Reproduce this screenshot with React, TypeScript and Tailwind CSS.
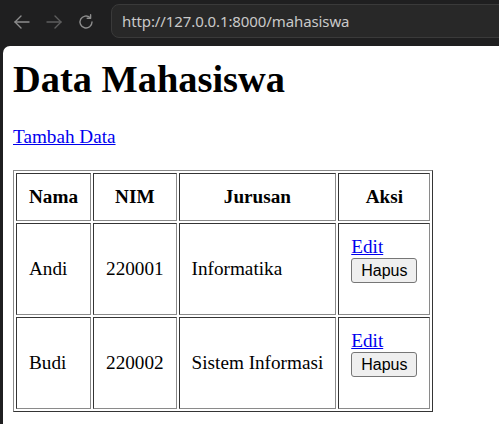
import React from 'react';

const rows = [
  { nama: 'Andi', nim: '220001', jurusan: 'Informatika' },
  { nama: 'Budi', nim: '220002', jurusan: 'Sistem Informasi' },
];

const cell =
  'border border-solid border-t-[#353535] border-l-[#353535] border-r-[#8a8a8a] border-b-[#8a8a8a] p-[12px]';

const BackIcon = ({ color }: { color: string }) => (
  <svg width="18" height="18" viewBox="0 0 18 18" fill="none" stroke={color} strokeWidth="1.4" strokeLinecap="round" strokeLinejoin="round">
    <path d="M16 9H2" />
    <path d="M8 3L2 9l6 6" />
  </svg>
);

const ForwardIcon = ({ color }: { color: string }) => (
  <svg width="18" height="18" viewBox="0 0 18 18" fill="none" stroke={color} strokeWidth="1.4" strokeLinecap="round" strokeLinejoin="round">
    <path d="M2 9h14" />
    <path d="M10 3l6 6-6 6" />
  </svg>
);

const ReloadIcon = ({ color }: { color: string }) => (
  <svg width="18" height="18" viewBox="0 0 18 18" fill="none" stroke={color} strokeWidth="1.4" strokeLinecap="round" strokeLinejoin="round">
    <path d="M15 9a6 6 0 1 1-2-4.5" />
    <path d="M13.6 1.8v3.4h-3.4" />
  </svg>
);

export default function App() {
  return (
    <div className="w-[499px] h-[424px] bg-[#1f1f20] flex flex-col overflow-hidden">
      {/* browser bar */}
      <div className="h-[46px] flex items-start shrink-0 pl-[6px]">
        <div className="flex mt-[13px]">
          <div className="w-[32px] flex justify-center"><BackIcon color="#8d8d8d" /></div>
          <div className="w-[32px] flex justify-center"><ForwardIcon color="#5e5e5e" /></div>
          <div className="w-[32px] flex justify-center"><ReloadIcon color="#8d8d8d" /></div>
        </div>
        <div className="ml-[9px] mt-[4px] h-[34px] w-[420px] shrink-0 rounded-[8px] bg-[#282828] border border-[#3a3a3a] flex items-center pl-[10px]">
          <span className="text-[15px] text-[#c9c9c9] font-['Noto_Sans',sans-serif] tracking-[-0.1px]">
            http://127.0.0.1:8000/mahasiswa
          </span>
        </div>
      </div>

      {/* page */}
      <div className="flex-1 ml-[3px] bg-white rounded-tl-[7px] overflow-hidden pl-[10px] pt-[11px] font-['Liberation_Serif','Times_New_Roman',serif] text-black">
        <h1 className="text-[38.4px] font-bold leading-[44px]">Data Mahasiswa</h1>
        <p className="mt-[25px] text-[19.2px] leading-[22px]">
          <a href="#" className="text-[#0000ee] underline">Tambah Data</a>
        </p>
        <table className="mt-[22px] border-separate border-spacing-[2px] border border-solid border-t-[#8a8a8a] border-l-[#8a8a8a] border-r-[#353535] border-b-[#353535] text-[19.2px] leading-[22px]">
          <thead>
            <tr>
              <th className={cell + ' text-center font-bold'}>Nama</th>
              <th className={cell + ' text-center font-bold'}>NIM</th>
              <th className={cell + ' text-center font-bold'}>Jurusan</th>
              <th className={cell + ' text-center font-bold'}>Aksi</th>
            </tr>
          </thead>
          <tbody>
            {rows.map((r) => (
              <tr key={r.nim}>
                <td className={cell + ' align-middle'}>{r.nama}</td>
                <td className={cell + ' align-middle'}>{r.nim}</td>
                <td className={cell + ' align-middle'}>{r.jurusan}</td>
                <td className={cell + ' align-top'}>
                  <a href="#" className="block text-[#0000ee] underline leading-[22px] w-fit">Edit</a>
                  <button className="block mb-[19px] h-[25px] px-[9px] bg-[#efefef] border border-[#767676] rounded-[3px] font-['Liberation_Sans',Arial,sans-serif] text-[16px] leading-[18px] text-black">
                    Hapus
                  </button>
                </td>
              </tr>
            ))}
          </tbody>
        </table>
      </div>
    </div>
  );
}
